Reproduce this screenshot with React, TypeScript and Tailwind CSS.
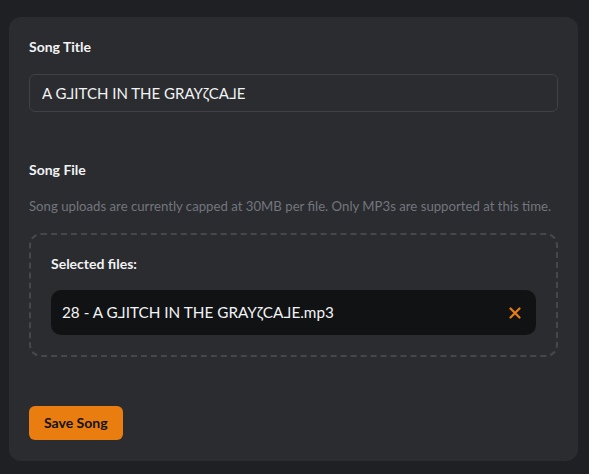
import React from "react";

const App = () => {
  return (
    <main
      className="min-h-screen bg-[#1f2023] pl-[9px] pr-[11px] pt-[17px] pb-[13px]"
      style={{ fontFamily: "Lato, 'Noto Sans', sans-serif" }}
    >
      <section className="rounded-xl bg-[#2b2c2f] px-5 pt-[20px] pb-[21px]">
        <label className="block text-sm font-bold text-[#f2f3f5]">Song Title</label>
        <input
          type="text"
          defaultValue="A G⅃ITCH IN THE GRAYζCA⅃E"
          className="mt-[17px] h-[38px] w-full rounded-md border border-[#3f4146] bg-[#2b2c2f] px-3 text-[15px] text-[#f2f3f5] outline-none"
        />

        <h2 className="mt-[48px] text-sm font-bold text-[#f2f3f5]">Song File</h2>
        <p className="mt-[17px] text-[13.2px] leading-[18px] text-[#72767d]">
          Song uploads are currently capped at 30MB per file. Only MP3s are supported at this time.
        </p>

        <div className="mt-[18px] rounded-xl border-2 border-dashed border-[#45474c] px-5 pt-[19px] pb-[20px]">
          <p className="text-sm font-bold text-[#f2f3f5]">Selected files:</p>
          <div className="mt-[16px] flex h-[45px] items-center justify-between rounded-[10px] bg-[#111214] pl-[11px] pr-[15px]">
            <span className="text-[15.3px] text-[#f2f3f5]">28 - A G⅃ITCH IN THE GRAYζCA⅃E.mp3</span>
            <button className="text-[#e97d0f]">
              <svg width="12" height="12" viewBox="0 0 12 12" fill="none">
                <path d="M1.5 1.5l9 9M10.5 1.5l-9 9" stroke="currentColor" strokeWidth="2.2" strokeLinecap="round" />
              </svg>
            </button>
          </div>
        </div>

        <button className="mt-[49px] h-[34px] rounded-md bg-[#e97d0f] px-[15px] text-sm font-bold text-[#111214]">
          Save Song
        </button>
      </section>
    </main>
  );
};

export default App;
